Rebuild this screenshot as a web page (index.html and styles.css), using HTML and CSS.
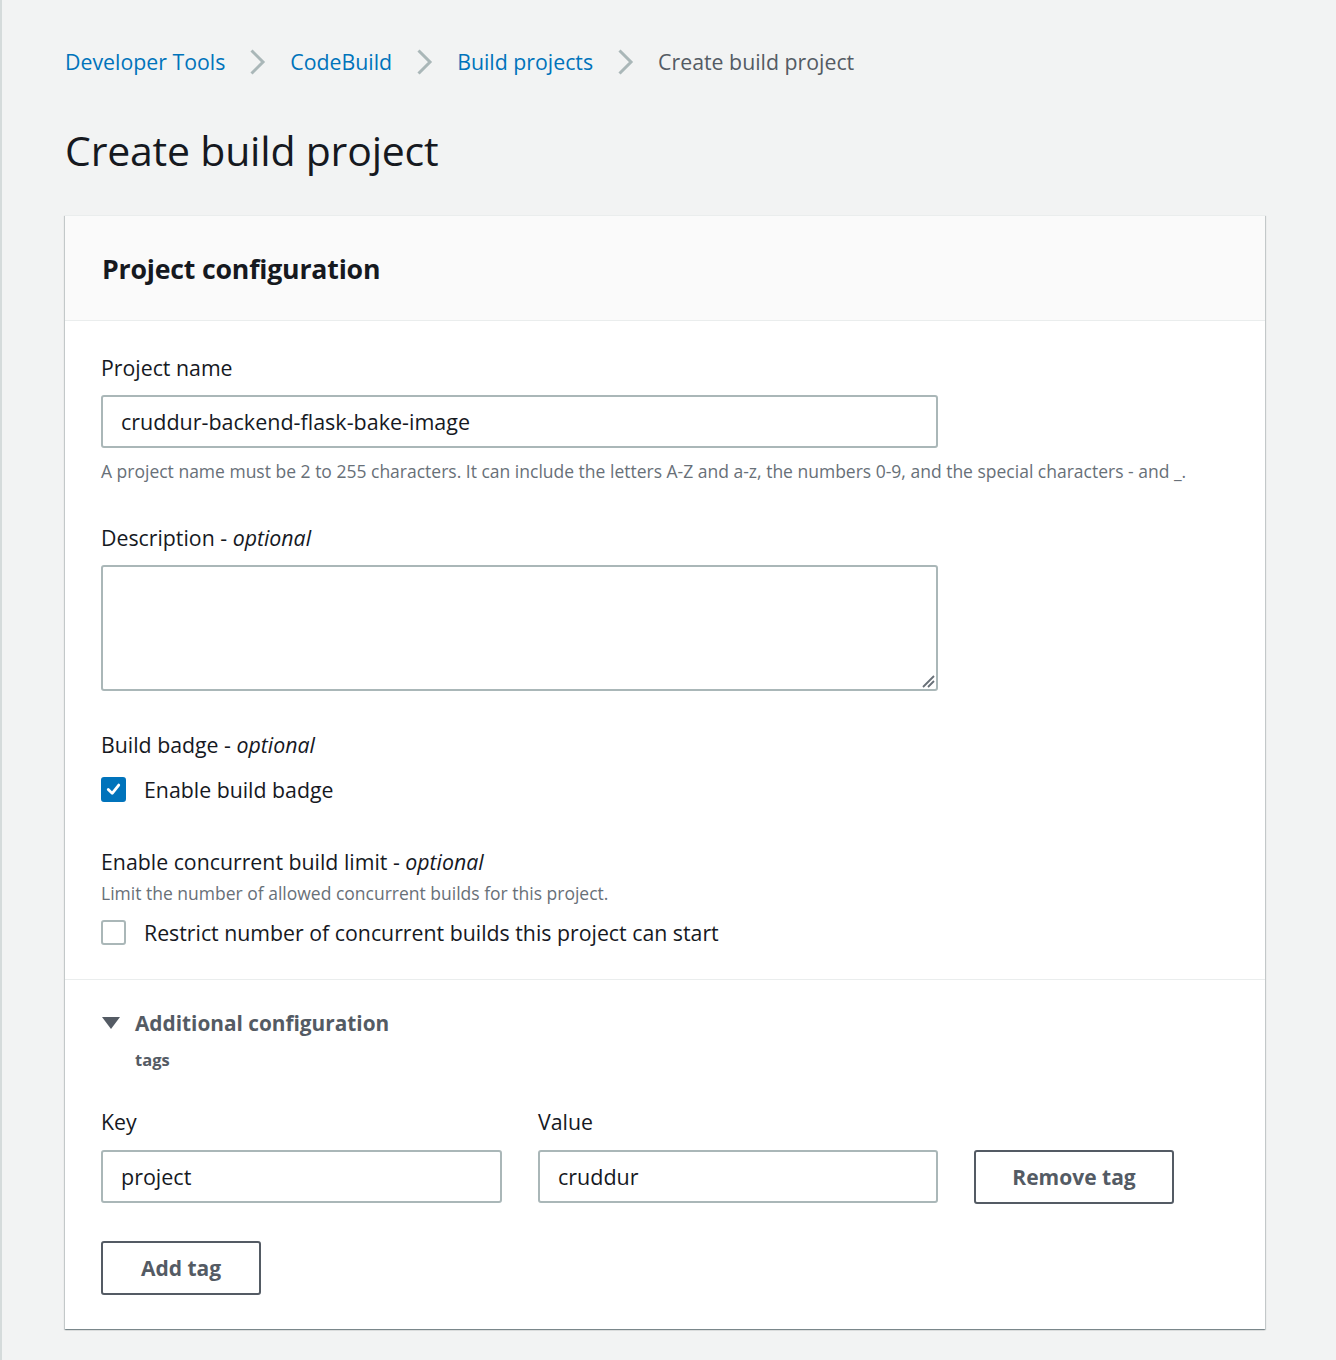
FILE: index.html
```html
<!DOCTYPE html>
<html lang="en">
<head>
<meta charset="utf-8">
<title>Create build project</title>
<link rel="stylesheet" href="styles.css">
</head>
<body>
<div class="page">
  <nav class="crumbs">
    <a class="crumb-link" href="#">Developer Tools</a>
    <svg class="chev" viewBox="0 0 17 28" width="17" height="28"><path d="M2.5 2.5 L14 14 L2.5 25.5" fill="none" stroke="#aab7b8" stroke-width="3"/></svg>
    <a class="crumb-link" href="#">CodeBuild</a>
    <svg class="chev" viewBox="0 0 17 28" width="17" height="28"><path d="M2.5 2.5 L14 14 L2.5 25.5" fill="none" stroke="#aab7b8" stroke-width="3"/></svg>
    <a class="crumb-link" href="#">Build projects</a>
    <svg class="chev" viewBox="0 0 17 28" width="17" height="28"><path d="M2.5 2.5 L14 14 L2.5 25.5" fill="none" stroke="#aab7b8" stroke-width="3"/></svg>
    <span class="crumb-current">Create build project</span>
  </nav>

  <h1 class="title">Create build project</h1>

  <section class="card">
    <header class="card-head">
      <h2 class="card-title">Project configuration</h2>
    </header>

    <div class="card-body">
      <div class="field">
        <label class="label">Project name</label>
        <div class="input wide">cruddur-backend-flask-bake-image</div>
        <p class="hint">A project name must be 2 to 255 characters. It can include the letters A-Z and a-z, the numbers 0-9, and the special characters - and _.</p>
      </div>

      <div class="field desc-field">
        <label class="label">Description - <em>optional</em></label>
        <div class="textarea wide">
          <svg class="grip" viewBox="0 0 14 14" width="14" height="14"><path d="M2 13 L13 2 M7 13 L13 7" stroke="#687078" stroke-width="1.8" fill="none"/></svg>
        </div>
      </div>

      <div class="field badge-field">
        <label class="label">Build badge - <em>optional</em></label>
        <div class="check-row">
          <span class="box checked">
            <svg viewBox="0 0 24 24" width="24" height="24"><path d="M6 12.5 L10.5 17 L18 7.5" fill="none" stroke="#fff" stroke-width="3.2" stroke-linecap="round" stroke-linejoin="round"/></svg>
          </span>
          <span class="check-label">Enable build badge</span>
        </div>
      </div>

      <div class="field last">
        <label class="label">Enable concurrent build limit - <em>optional</em></label>
        <p class="desc">Limit the number of allowed concurrent builds for this project.</p>
        <div class="check-row">
          <span class="box"></span>
          <span class="check-label">Restrict number of concurrent builds this project can start</span>
        </div>
      </div>
    </div>

    <div class="card-extra">
      <div class="expander">
        <svg class="tri" viewBox="0 0 18 14" width="18" height="14"><path d="M0 1 H18 L9 13 Z" fill="#545b64"/></svg>
        <span class="expander-title">Additional configuration</span>
      </div>
      <div class="sub">tags</div>

      <div class="tag-grid">
        <label class="label">Key</label>
        <label class="label">Value</label>
        <span></span>
        <div class="input">project</div>
        <div class="input">cruddur</div>
        <button class="btn" type="button">Remove tag</button>
      </div>
      <button class="btn add" type="button">Add tag</button>
    </div>
  </section>
</div>
</body>
</html>
```
FILE: styles.css
```css
html, body {
  margin: 0;
  padding: 0;
}
body {
  background: #f2f3f3;
  font-family: "Open Sans", "Noto Sans", Arial, sans-serif;
  color: #16191f;
  border-left: 2px solid #d5dbdb;
  min-height: 1360px;
  box-sizing: border-box;
}
.page {
  padding: 46px 71px 30px 63px;
}
.crumbs {
  display: flex;
  align-items: center;
  font-size: 21.3px;
  line-height: 32px;
  height: 32px;
}
.crumb-link {
  color: #0073bb;
  text-decoration: none;
}
.crumb-current {
  color: #545b64;
}
.chev {
  margin: 0 24px 0 24px;
}
.title {
  margin: 42px 0 0 0;
  font-size: 41px;
  font-weight: 400;
  line-height: 60px;
  height: 60px;
  letter-spacing: -0.2px;
}
.card {
  margin-top: 35px;
  background: #fff;
  box-shadow: 0 1px 1px 0 rgba(0,28,36,.3), 1px 1px 1px 0 rgba(0,28,36,.15), -1px 1px 1px 0 rgba(0,28,36,.15);
  border-top: 1px solid #eaeded;
}
.card-head {
  background: #fafafa;
  border-bottom: 1px solid #eaeded;
  height: 104px;
  display: flex;
  align-items: center;
  padding: 0 37px;
}
.card-title {
  margin: 0;
  font-size: 26.7px;
  font-weight: 700;
  letter-spacing: -0.2px;
}
.card-body {
  padding: 32px 36px 32px;
  border-bottom: 1px solid #eaeded;
}
.field {
  margin-bottom: 38px;
}
.field.desc-field {
  margin-bottom: 39px;
}
.field.badge-field {
  margin-bottom: 43px;
}
.field.last {
  margin-bottom: 0;
}
.label {
  display: block;
  font-size: 21.3px;
  line-height: 30px;
  margin-bottom: 12px;
}
.field.badge-field .label {
  margin-bottom: 14px;
}
.label em {
  font-style: italic;
}
.input {
  box-sizing: border-box;
  height: 53px;
  border: 2px solid #aab7b8;
  border-radius: 3px;
  padding: 0 18px;
  font-size: 21.5px;
  line-height: 49px;
  color: #16191f;
  background: #fff;
}
.wide {
  width: 837px;
}
.hint {
  margin: 9px 0 0 0;
  font-size: 17.5px;
  line-height: 28px;
  color: #687078;
}
.textarea {
  box-sizing: border-box;
  height: 126px;
  border: 2px solid #aab7b8;
  border-radius: 3px;
  position: relative;
}
.grip {
  position: absolute;
  right: 1px;
  bottom: 1px;
}
.check-row {
  display: flex;
  align-items: center;
  height: 30px;
}
.box {
  box-sizing: border-box;
  width: 25px;
  height: 25px;
  border: 2px solid #aab7b8;
  border-radius: 3px;
  margin-right: 18px;
  display: flex;
  align-items: center;
  justify-content: center;
}
.box.checked {
  background: #0073bb;
  border-color: #0073bb;
}
.box.checked svg {
  width: 22px;
  height: 22px;
}
.check-label {
  font-size: 21.3px;
}
.desc {
  margin: -9px 0 11px 0;
  font-size: 17.5px;
  line-height: 26px;
  color: #687078;
}
.card-extra {
  padding: 28px 36px 34px;
}
.expander {
  display: flex;
  align-items: center;
  height: 30px;
}
.tri {
  margin-right: 15px;
  margin-left: 1px;
}
.expander-title {
  font-size: 20.8px;
  font-weight: 700;
  color: #545b64;
}
.sub {
  margin: 9px 0 0 34px;
  font-size: 16.5px;
  font-weight: 700;
  color: #545b64;
  line-height: 26px;
}
.tag-grid {
  margin-top: 34px;
  display: grid;
  grid-template-columns: 401px 400px 200px;
  column-gap: 36px;
}
.tag-grid .label {
  margin-bottom: 13px;
}
.btn {
  box-sizing: border-box;
  height: 54px;
  border: 2px solid #545b64;
  border-radius: 3px;
  background: #fff;
  color: #545b64;
  font-family: inherit;
  font-size: 21px;
  font-weight: 700;
  padding: 0;
  width: 200px;
}
.btn.add {
  margin-top: 37px;
  width: 160px;
}
```
